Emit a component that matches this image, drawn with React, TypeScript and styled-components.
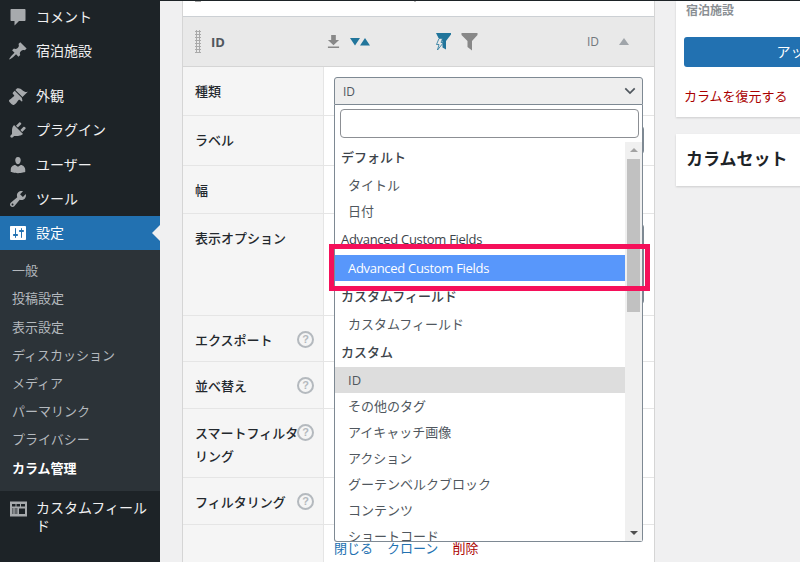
import styled, { createGlobalStyle } from 'styled-components';

const GlobalStyle = createGlobalStyle`
  html, body {
    margin: 0;
    padding: 0;
    background: #f0f0f1;
    overflow: hidden;
  }

  * {
    box-sizing: border-box;
  }

  body {
    color: #3c434a;
    font-family: 'Open Sans', 'Noto Sans CJK JP', sans-serif;
    font-size: 13px;
  }
`;

const menuIcons: Record<string, string> = {
  comment: 'M3.5 2h13c.6 0 1 .4 1 1v10c0 .6-.4 1-1 1H11l-4.500 4.500V14h-3c-.6 0-1-.4-1-1V3c0-.6.4-1 1-1z',
  pin: 'M10.44 3.02l1.82-1.82 6.36 6.35-1.83 1.82c-1.05-.68-2.48-.57-3.41.36l-.75.75c-.92.93-1.04 2.35-.35 3.41l-1.83 1.82-2.41-2.41-2.8 2.79c-.42.42-3.38 2.71-3.8 2.29s1.86-3.39 2.28-3.81l2.79-2.79L4.1 9.36l1.83-1.82c1.05.69 2.48.57 3.4-.36l.75-.75c.93-.92 1.05-2.35.36-3.41z',
  brush: 'M14.48 11.06L7.41 3.99l1.5-1.5c.5-.56 2.3-.47 3.51.32 1.21.8 1.43 1.28 2.91 2.1 1.18.64 2.45 1.26 4.45.85zm-.71.71L6.7 4.7 4.93 6.47c-.39.39-.39 1.02 0 1.41l1.06 1.06c.39.39.39 1.03 0 1.42-.6.6-1.43 1.11-2.21 1.69-.35.26-.7.53-1.01.84C1.43 13.23.66 14.4 1.15 15.4c.26.53.78 1.09 1.55 1.86.78.78 1.34 1.31 1.88 1.59.99.5 2.14-.27 3.48-1.61.3-.31.58-.66.83-1.01.59-.78 1.11-1.6 1.7-2.2.39-.39 1.02-.39 1.41 0l1.06 1.06c.39.39 1.03.39 1.42 0z',
  plug: 'M13.11 4.36L9.87 7.6 8 5.73l3.24-3.24c.35-.34 1.05-.2 1.56.32.52.51.66 1.21.31 1.55zm-8 1.77l.91-1.12 9.01 9.01-1.19.84c-.71.71-2.63 1.16-3.82 1.16H6.14L4.9 17.26c-.59.59-1.54.59-2.12 0-.59-.58-.59-1.53 0-2.12l1.24-1.24v-3.88c0-1.13.4-3.19 1.09-3.89zm7.26 3.97l3.24-3.24c.34-.35 1.04-.21 1.55.31.52.51.66 1.21.31 1.55l-3.24 3.25z',
  user: 'M10 9.25c-2.27 0-2.73-3.44-2.73-3.44C7 4.02 7.82 2 9.97 2c2.16 0 2.98 2.02 2.71 3.81 0 0-.41 3.44-2.68 3.44zm0 2.57L12.72 10c2.39 0 4.52 2.33 4.52 4.53v2.49s-3.65 1.13-7.24 1.13c-3.65 0-7.24-1.13-7.24-1.13v-2.49c0-2.25 1.94-4.48 4.47-4.48z',
  wrench: 'M16.68 9.77c-1.34 1.34-3.3 1.67-4.95.99l-5.41 6.52c-.99.99-2.59.99-3.58 0s-.99-2.59 0-3.57l6.52-5.42c-.68-1.65-.35-3.61.99-4.95 1.28-1.28 3.12-1.62 4.72-1.06l-2.89 2.89 2.82 2.82 2.86-2.87c.53 1.58.18 3.39-1.08 4.65zM3.81 16.21c.4.39 1.04.39 1.43 0 .4-.4.4-1.04 0-1.43-.39-.4-1.03-.4-1.43 0-.39.39-.39 1.03 0 1.43z',
  settings: 'M18 16V4c0-.55-.45-1-1-1H3c-.55 0-1 .45-1 1v12c0 .55.45 1 1 1h14c.55 0 1-.45 1-1zM8 11h1c.55 0 1 .45 1 1s-.45 1-1 1H8v1.5c0 .28-.22.5-.5.5s-.5-.22-.5-.5V13H6c-.55 0-1-.45-1-1s.45-1 1-1h1V5.5c0-.28.22-.5.5-.5s.5.22.5.5V11zm5-2h-1c-.55 0-1-.45-1-1s.45-1 1-1h1V5.5c0-.28.22-.5.5-.5s.5.22.5.5V7h1c.55 0 1 .45 1 1s-.45 1-1 1h-1v5.5c0 .28-.22.5-.5.5s-.5-.22-.5-.5V9z',
  table: 'M2 2.500h17v15H2zM4 5v2.500h3.500V5zM8.500 5v2.500h3.500V5zM13 5v2.500h4V5zM4 9.500v1h1.500v-1zM6.500 9.500v1h3v-1zM4 11.500v1h1.500v-1zM6.500 11.500v1h3v-1zM4 13.500v1h1.500v-1zM6.500 13.500v1h3v-1zM11 9.500v5.500h6V9.500z',
};

const topMenu = [
  { icon: 'comment', label: 'コメント' },
  { icon: 'pin', label: '宿泊施設' },
  { icon: 'brush', label: '外観', gap: true },
  { icon: 'plug', label: 'プラグイン' },
  { icon: 'user', label: 'ユーザー' },
  { icon: 'wrench', label: 'ツール' },
];

const subMenu = ['一般', '投稿設定', '表示設定', 'ディスカッション', 'メディア', 'パーマリンク', 'プライバシー'];

const MenuIcon = ({ name }: { name: string }) => (
  <IconSvg viewBox="0 0 20 20" fillRule="evenodd">
    <path d={menuIcons[name]} />
  </IconSvg>
);

const Help = () => <HelpMark>?</HelpMark>;

const App = () => {
  return (
    <Page>
      <GlobalStyle />
      <Sidebar>
        {topMenu.map((item) => (
          <MenuItem key={item.label} $gap={item.gap}>
            <MenuIcon name={item.icon} />
            <MenuLabel>{item.label}</MenuLabel>
          </MenuItem>
        ))}
        <ActiveItem>
          <MenuIcon name="settings" />
          <MenuLabel>設定</MenuLabel>
        </ActiveItem>
        <SubMenu>
          {subMenu.map((label) => (
            <SubItem key={label}>{label}</SubItem>
          ))}
          <SubItem $current>カラム管理</SubItem>
        </SubMenu>
        <WrapItem>
          <MenuIcon name="table" />
          <span>カスタムフィールド</span>
        </WrapItem>
      </Sidebar>

      <Main>
        <ColumnPanel>
          <PrevRow />
          <ColumnHeader>
            <DragHandle />
            <ColumnName>ID</ColumnName>
            <ToolIcons>
              <svg width="13" height="15" viewBox="0 0 14 16" fill="#888">
                <path d="M4.500 1h5v5.500H13L7 12 1 6.500h3.500zM1 13.500h12V15H1z" />
              </svg>
              <SortIcon viewBox="0 0 20 8" fill="#21759b">
                <path d="M0 0h10L5 7.500zM10 7.500h10L15 0z" />
              </SortIcon>
            </ToolIcons>
            <FilterIcons>
              <svg width="17" height="19" viewBox="0 0 17 19" fill="#21759b">
                <path d="M2 1h15v1.500L12 9v8.500l-3.500-2V10L7.500 6H4.500z" />
                <path d="M5 6.500h3.500L7 10.500h2.500L3.500 18l1.500-5.500H2.500z" fill="#e9e9e9" stroke="#21759b" strokeWidth="0.8" />
              </svg>
              <svg width="17" height="19" viewBox="0 0 17 19" fill="#888">
                <path d="M0.500 1h16v2l-5.500 6v9.500L6.500 15V9L0.500 3z" />
              </svg>
            </FilterIcons>
            <ColumnType>ID</ColumnType>
            <Caret />
          </ColumnHeader>

          <FieldRow $height={49}>
            <FieldLabel>種類</FieldLabel>
            <FieldValue>
              <SelectWrap>
                <SelectBox>
                  ID
                  <svg width="12" height="8" viewBox="0 0 14 9" fill="none" stroke="#50575e" strokeWidth="2">
                    <path d="M1.500 1.500L7 7l5.500-5.500" />
                  </svg>
                </SelectBox>
                <Dropdown>
                  <SearchBox />
                  <DropBody>
                    <OptionList>
                      <GroupLabel>デフォルト</GroupLabel>
                      <Option>タイトル</Option>
                      <Option>日付</Option>
                      <GroupLabel $tall>
                        <LatinText>Advanced Custom Fields</LatinText>
                      </GroupLabel>
                      <Option $kind="hover">
                        <LatinText>Advanced Custom Fields</LatinText>
                      </Option>
                      <GroupLabel>カスタムフィールド</GroupLabel>
                      <Option>カスタムフィールド</Option>
                      <GroupLabel>カスタム</GroupLabel>
                      <Option $kind="selected">ID</Option>
                      <Option>その他のタグ</Option>
                      <Option>アイキャッチ画像</Option>
                      <Option>アクション</Option>
                      <Option>グーテンベルクブロック</Option>
                      <Option>コンテンツ</Option>
                      <Option>ショートコード</Option>
                    </OptionList>
                    <Scrollbar>
                      <ArrowUp />
                      <Thumb />
                      <ArrowDown />
                    </Scrollbar>
                  </DropBody>
                </Dropdown>
                <HighlightFrame />
              </SelectWrap>
            </FieldValue>
          </FieldRow>
          <FieldRow $height={50}>
            <FieldLabel>ラベル</FieldLabel>
            <FieldValue>
              <BehindInput $height={28} />
            </FieldValue>
          </FieldRow>
          <FieldRow $height={48}>
            <FieldLabel>幅</FieldLabel>
            <FieldValue />
          </FieldRow>
          <FieldRow $height={102}>
            <FieldLabel>表示オプション</FieldLabel>
            <FieldValue>
              <BehindInput $height={80} />
            </FieldValue>
          </FieldRow>
          <FieldRow $height={46}>
            <FieldLabel>
              エクスポート
              <Help />
            </FieldLabel>
            <FieldValue />
          </FieldRow>
          <FieldRow $height={47}>
            <FieldLabel>
              並べ替え
              <Help />
            </FieldLabel>
            <FieldValue />
          </FieldRow>
          <FieldRow $height={69}>
            <FieldLabel>
              スマートフィルタリング
              <Help />
            </FieldLabel>
            <FieldValue />
          </FieldRow>
          <FieldRow $height={47}>
            <FieldLabel>
              フィルタリング
              <Help />
            </FieldLabel>
            <FieldValue />
          </FieldRow>
          <FooterRow>
            <FieldLabel />
            <FooterLinks>
              <TextLink>閉じる</TextLink>
              <TextLink>クローン</TextLink>
              <TextLink $danger>削除</TextLink>
            </FooterLinks>
          </FooterRow>
        </ColumnPanel>

        <SideColumn>
          <PublishCard>
            <PostType>宿泊施設</PostType>
            <UpdateButton>アップデート</UpdateButton>
            <RestoreLink>カラムを復元する</RestoreLink>
          </PublishCard>
          <SetCard>カラムセット</SetCard>
        </SideColumn>
      </Main>
    </Page>
  );
};

export default App;

const Page = styled.div`
  display: flex;
  width: 800px;
  height: 562px;
  overflow: hidden;
`;

const Sidebar = styled.nav`
  flex: 0 0 160px;
  background: #1d2327;
  color: #f0f0f1;
  font-size: 14px;
`;

const IconSvg = styled.svg`
  flex: 0 0 20px;
  width: 20px;
  height: 20px;
  fill: #a7aaad;
`;

const MenuItem = styled.div<{ $gap?: boolean }>`
  display: flex;
  align-items: center;
  gap: 8px;
  height: 34.25px;
  margin-top: ${(props) => (props.$gap ? '10.5px' : '0')};
  padding-left: 8px;
`;

const MenuLabel = styled.span`
  padding-bottom: 2px;
`;

const ActiveItem = styled(MenuItem)`
  position: relative;
  background: #2271b1;
  color: #fff;

  svg {
    fill: #fff;
  }

  &::after {
    content: '';
    position: absolute;
    top: 9px;
    right: 0;
    border: 8px solid transparent;
    border-right-color: #f0f0f1;
    border-left-width: 0;
  }
`;

const SubMenu = styled.div`
  padding: 7px 0 8.4px;
  background: #2c3338;
  font-size: 13px;
`;

const SubItem = styled.div<{ $current?: boolean }>`
  height: 28.2px;
  padding-left: 12px;
  color: ${(props) => (props.$current ? '#fff' : '#b4b9be')};
  font-weight: ${(props) => (props.$current ? 700 : 400)};
  line-height: 27px;
`;

const WrapItem = styled.div`
  display: flex;
  gap: 8px;
  padding: 8px 8px 0;
  line-height: 18px;
`;

const Main = styled.main`
  display: flex;
  flex: 1;
  gap: 21px;
  padding-left: 22px;
  border-top: 1px solid #1d2327;
  background: #f0f0f1;
`;

const ColumnPanel = styled.section`
  flex: 0 0 472px;
  border: 1px solid #d5d5d5;
  border-width: 0 1px;
  background: #fff;
`;

const PrevRow = styled.div`
  height: 16px;
  border-bottom: 1px solid #ccd0d4;
  background:
    linear-gradient(#aaa, #aaa) 12px 0 / 6px 1px no-repeat,
    linear-gradient(#bbb, #bbb) 231px 0 / 2px 1px no-repeat;
`;

const ColumnHeader = styled.header`
  display: flex;
  align-items: center;
  height: 50px;
  padding-left: 12px;
  border-bottom: 1px solid #d5d5d5;
  background: #e9e9e9;
`;

const DragHandle = styled.div`
  width: 6px;
  height: 23px;
  background-image: radial-gradient(#aaa 1px, transparent 1.2px);
  background-size: 3px 3px;
`;

const ColumnName = styled.strong`
  width: 116px;
  margin-left: 10px;
  color: #50575e;
  font-size: 13px;
`;

const ToolIcons = styled.div`
  display: flex;
  align-items: center;
  gap: 10px;
  width: 107px;
`;

const SortIcon = styled.svg`
  width: 20px;
  height: 8px;
`;

const FilterIcons = styled.div`
  display: flex;
  gap: 10px;
  width: 153px;
`;

const ColumnType = styled.span`
  width: 32px;
  color: #72777c;
  font-size: 12px;
`;

const Caret = styled.span`
  border: 5px solid transparent;
  border-top-width: 0;
  border-bottom: 7px solid #a0a5aa;
`;

const FieldRow = styled.div<{ $height: number }>`
  display: flex;
  height: ${(props) => props.$height}px;
  border-bottom: 1px solid #e5e5e5;
`;

const FieldLabel = styled.div`
  position: relative;
  flex: 0 0 141px;
  padding: 13px 20px 0 12px;
  border-right: 1px solid #e5e5e5;
  background: #f5f5f5;
  color: #23282d;
  font-size: 13px;
  font-weight: 500;
  line-height: 23px;
`;

const HelpMark = styled.span`
  position: absolute;
  top: 15px;
  right: 9px;
  width: 17px;
  height: 17px;
  border: 2px solid #b4b9be;
  border-radius: 50%;
  color: #b4b9be;
  font-family: 'Liberation Sans', sans-serif;
  font-size: 11px;
  font-weight: 700;
  line-height: 13px;
  text-align: center;
`;

const FieldValue = styled.div`
  flex: 1;
  padding: 10px;
`;

const SelectWrap = styled.div`
  position: relative;
  width: 309px;
`;

const SelectBox = styled.div`
  display: flex;
  align-items: center;
  justify-content: space-between;
  height: 28px;
  padding: 0 6px 0 8px;
  border: 1px solid #7e8993;
  border-radius: 3px 3px 0 0;
  background: #eee;
  color: #50575e;
  font-size: 12px;
`;

const Dropdown = styled.div`
  position: absolute;
  z-index: 2;
  top: 28px;
  left: 0;
  display: flex;
  flex-direction: column;
  width: 309px;
  height: 437px;
  border: 1px solid #7e8993;
  border-top: none;
  border-radius: 0 0 3px 3px;
  background: #fff;
`;

const SearchBox = styled.div`
  flex: 0 0 29px;
  margin: 4px 3px 4px 5px;
  border: 1px solid #8c8f94;
  border-radius: 4px;
  background: #fff;
`;

const DropBody = styled.div`
  display: flex;
  flex: 1;
  min-height: 0;
`;

const OptionList = styled.div`
  flex: 1;
  overflow: hidden;
`;

const GroupLabel = styled.div<{ $tall?: boolean }>`
  height: ${(props) => (props.$tall ? 31 : 30)}px;
  padding-left: 6px;
  color: #3c434a;
  font-weight: 500;
  line-height: 30px;
`;

const LatinText = styled.span`
  letter-spacing: -0.3px;
`;

const optionBackgrounds = { hover: '#5897fb', selected: '#ddd', plain: 'transparent' };

const Option = styled.div<{ $kind?: 'hover' | 'selected' }>`
  height: 26px;
  padding-left: 13px;
  background: ${(props) => optionBackgrounds[props.$kind ?? 'plain']};
  color: ${(props) => (props.$kind === 'hover' ? '#fff' : '#50575e')};
  line-height: 26px;
`;

const Scrollbar = styled.div`
  display: flex;
  flex: 0 0 17px;
  flex-direction: column;
  align-items: center;
  padding: 6px 0;
  background: #f0f0f0;
`;

const ArrowUp = styled.span`
  border: 4px solid transparent;
  border-top-width: 0;
  border-bottom: 4px solid #a3a3a3;
`;

const Thumb = styled.div`
  width: 13px;
  height: 153px;
  margin-top: 7px;
  background: #c1c1c1;
`;

const ArrowDown = styled.span`
  margin-top: auto;
  border: 4px solid transparent;
  border-top: 4px solid #505050;
  border-bottom-width: 0;
`;

const HighlightFrame = styled.div`
  position: absolute;
  z-index: 3;
  top: 167px;
  left: -5px;
  width: 321px;
  height: 47px;
  border: 5px solid #f5105a;
`;

const BehindInput = styled.div<{ $height: number }>`
  width: 310px;
  height: ${(props) => props.$height}px;
  border: 1px solid #7e8993;
  border-radius: 3px;
`;

const FooterRow = styled.div`
  display: flex;
  height: 60px;
`;

const FooterLinks = styled.div`
  display: flex;
  gap: 14px;
  padding: 13px 0 0 10px;
  line-height: 20px;
`;

const TextLink = styled.a<{ $danger?: boolean }>`
  color: ${(props) => (props.$danger ? '#a00' : '#2271b1')};
`;

const SideColumn = styled.aside`
  display: flex;
  flex: 0 0 285px;
  flex-direction: column;
  gap: 17px;
`;

const PublishCard = styled.div`
  height: 116px;
  padding: 2px 8px 0;
  background: #fff;
  box-shadow: 0 1px 2px rgba(0, 0, 0, 0.15);
`;

const PostType = styled.div`
  padding: 0 2px;
  color: #8a8f94;
  font-size: 12px;
  font-weight: 700;
  line-height: 16px;
`;

const UpdateButton = styled.div`
  margin-top: 18px;
  height: 30px;
  border-radius: 3px;
  background: #2271b1;
  color: #fff;
  font-size: 14px;
  line-height: 30px;
  text-align: center;
`;

const RestoreLink = styled.a`
  display: block;
  margin-top: 19px;
  color: #a00;
  line-height: 20px;
`;

const SetCard = styled.div`
  height: 52px;
  padding-left: 10px;
  background: #fff;
  box-shadow: 0 1px 2px rgba(0, 0, 0, 0.15);
  color: #1d2327;
  font-size: 17px;
  font-weight: 700;
  line-height: 50px;
`;
